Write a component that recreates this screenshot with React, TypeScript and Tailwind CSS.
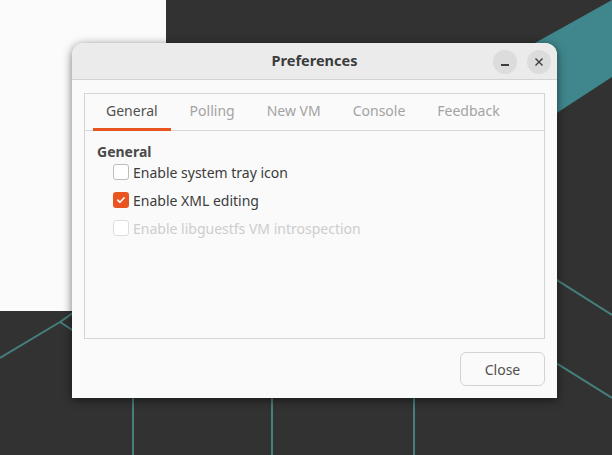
import React, { useState } from "react";

const FONT = { fontFamily: '"Noto Sans", "Open Sans", sans-serif' };

const tabs = ["General", "Polling", "New VM", "Console", "Feedback"];

// Desktop wallpaper lines behind the windows
const Wallpaper = () => (
  <svg className="absolute inset-0" width="612" height="455" viewBox="0 0 612 455">
    <polygon points="612,0 400,118 400,215 612,77" fill="#3f878c" />
    <g stroke="#467f7b" strokeWidth="2" fill="none">
      <line x1="0" y1="358" x2="60" y2="322" />
      <line x1="60" y1="322" x2="80" y2="308" />
      <line x1="60" y1="322" x2="80" y2="335" />
      <line x1="500" y1="244" x2="612" y2="315" />
      <line x1="500" y1="328" x2="612" y2="398" />
      <line x1="133" y1="380" x2="133" y2="455" />
      <line x1="272" y1="380" x2="272" y2="455" />
      <line x1="414" y1="380" x2="414" y2="455" />
    </g>
  </svg>
);

const Check = ({ checked, disabled }: { checked?: boolean; disabled?: boolean }) =>
  checked ? (
    <span className="w-4 h-4 rounded-[3px] bg-[#e95420] flex items-center justify-center">
      <svg width="10" height="10" viewBox="0 0 10 10">
        <path d="M1.8 5.2 L4 7.3 L8.2 2.8" stroke="white" strokeWidth="1.6" fill="none" strokeLinecap="round" strokeLinejoin="round" />
      </svg>
    </span>
  ) : (
    <span
      className={
        "w-4 h-4 rounded-[3px] border bg-white " +
        (disabled ? "border-[#dedede]" : "border-[#bdbdbd]")
      }
    />
  );

export default function App() {
  const [active, setActive] = useState(0);
  const [tray, setTray] = useState(false);
  const [xml, setXml] = useState(true);

  return (
    <div className="relative w-[612px] h-[455px] overflow-hidden bg-[#323232]" style={FONT}>
      <Wallpaper />

      {/* window behind */}
      <div className="absolute left-0 top-0 w-[166px] h-[311px] bg-[#fbfbfb]" />

      {/* Preferences dialog */}
      <div className="absolute left-[72px] top-[43px] w-[485px] h-[355px] rounded-t-[12px] bg-[#fafafa] shadow-[0_2px_10px_rgba(0,0,0,0.55)] flex flex-col">
        <div className="relative h-[37px] shrink-0 rounded-t-[12px] bg-[#ebebeb] border-b border-[#d3d3d3] flex items-center justify-center">
          <span className="text-[14.5px] font-bold text-[#3c3c3c]">Preferences</span>
          <div className="absolute right-[6px] top-[7px] flex gap-[10px]">
            <button className="w-6 h-6 rounded-full bg-[#dcdcdc] flex items-center justify-center">
              <span className="mt-[6px] w-[8px] h-[1.5px] bg-[#3c3c3c]" />
            </button>
            <button className="w-6 h-6 rounded-full bg-[#dcdcdc] flex items-center justify-center">
              <svg width="10" height="10" viewBox="0 0 10 10">
                <path d="M1.5 1.5 L8.5 8.5 M8.5 1.5 L1.5 8.5" stroke="#3c3c3c" strokeWidth="1.4" />
              </svg>
            </button>
          </div>
        </div>

        <div className="flex-1 flex flex-col px-[12px] pt-[13px] pb-[12px]">
          <div className="h-[246px] border border-[#d5d5d5] flex flex-col">
            <div className="h-[37px] shrink-0 border-b border-[#d8d8d8] flex gap-[6px] pl-[8px]">
              {tabs.map((t, i) => (
                <button
                  key={t}
                  onClick={() => setActive(i)}
                  className={
                    "relative px-[13px] pb-[4px] text-[14px] " +
                    (i === active ? "text-[#505050]" : "text-[#a3a3a3]")
                  }
                >
                  {t}
                  {i === active && (
                    <span className="absolute left-0 right-0 bottom-[-1px] h-[3px] bg-[#e95420]" />
                  )}
                </button>
              ))}
            </div>

            <div className="pl-[12px] pt-[14px] flex flex-col">
              <div className="text-[14px] font-bold text-[#4a4a4a] leading-[13px]">General</div>
              <div className="pl-[16px] flex flex-col">
                <label className="h-[28px] flex items-center gap-[4px] text-[14px] text-[#3c3c3c]" onClick={() => setTray(!tray)}>
                  <Check checked={tray} />
                  <span>Enable system tray icon</span>
                </label>
                <label className="h-[28px] flex items-center gap-[4px] text-[14px] text-[#3c3c3c]" onClick={() => setXml(!xml)}>
                  <Check checked={xml} />
                  <span>Enable XML editing</span>
                </label>
                <label className="h-[28px] flex items-center gap-[4px] text-[14px] text-[#cdcdcd]">
                  <Check disabled />
                  <span>Enable libguestfs VM introspection</span>
                </label>
              </div>
            </div>
          </div>

          <div className="mt-auto flex justify-end">
            <button className="w-[85px] h-[34px] rounded-[6px] border border-[#d3d3d3] bg-[#fafafa] text-[14px] text-[#505050]">
              Close
            </button>
          </div>
        </div>
      </div>
    </div>
  );
}
